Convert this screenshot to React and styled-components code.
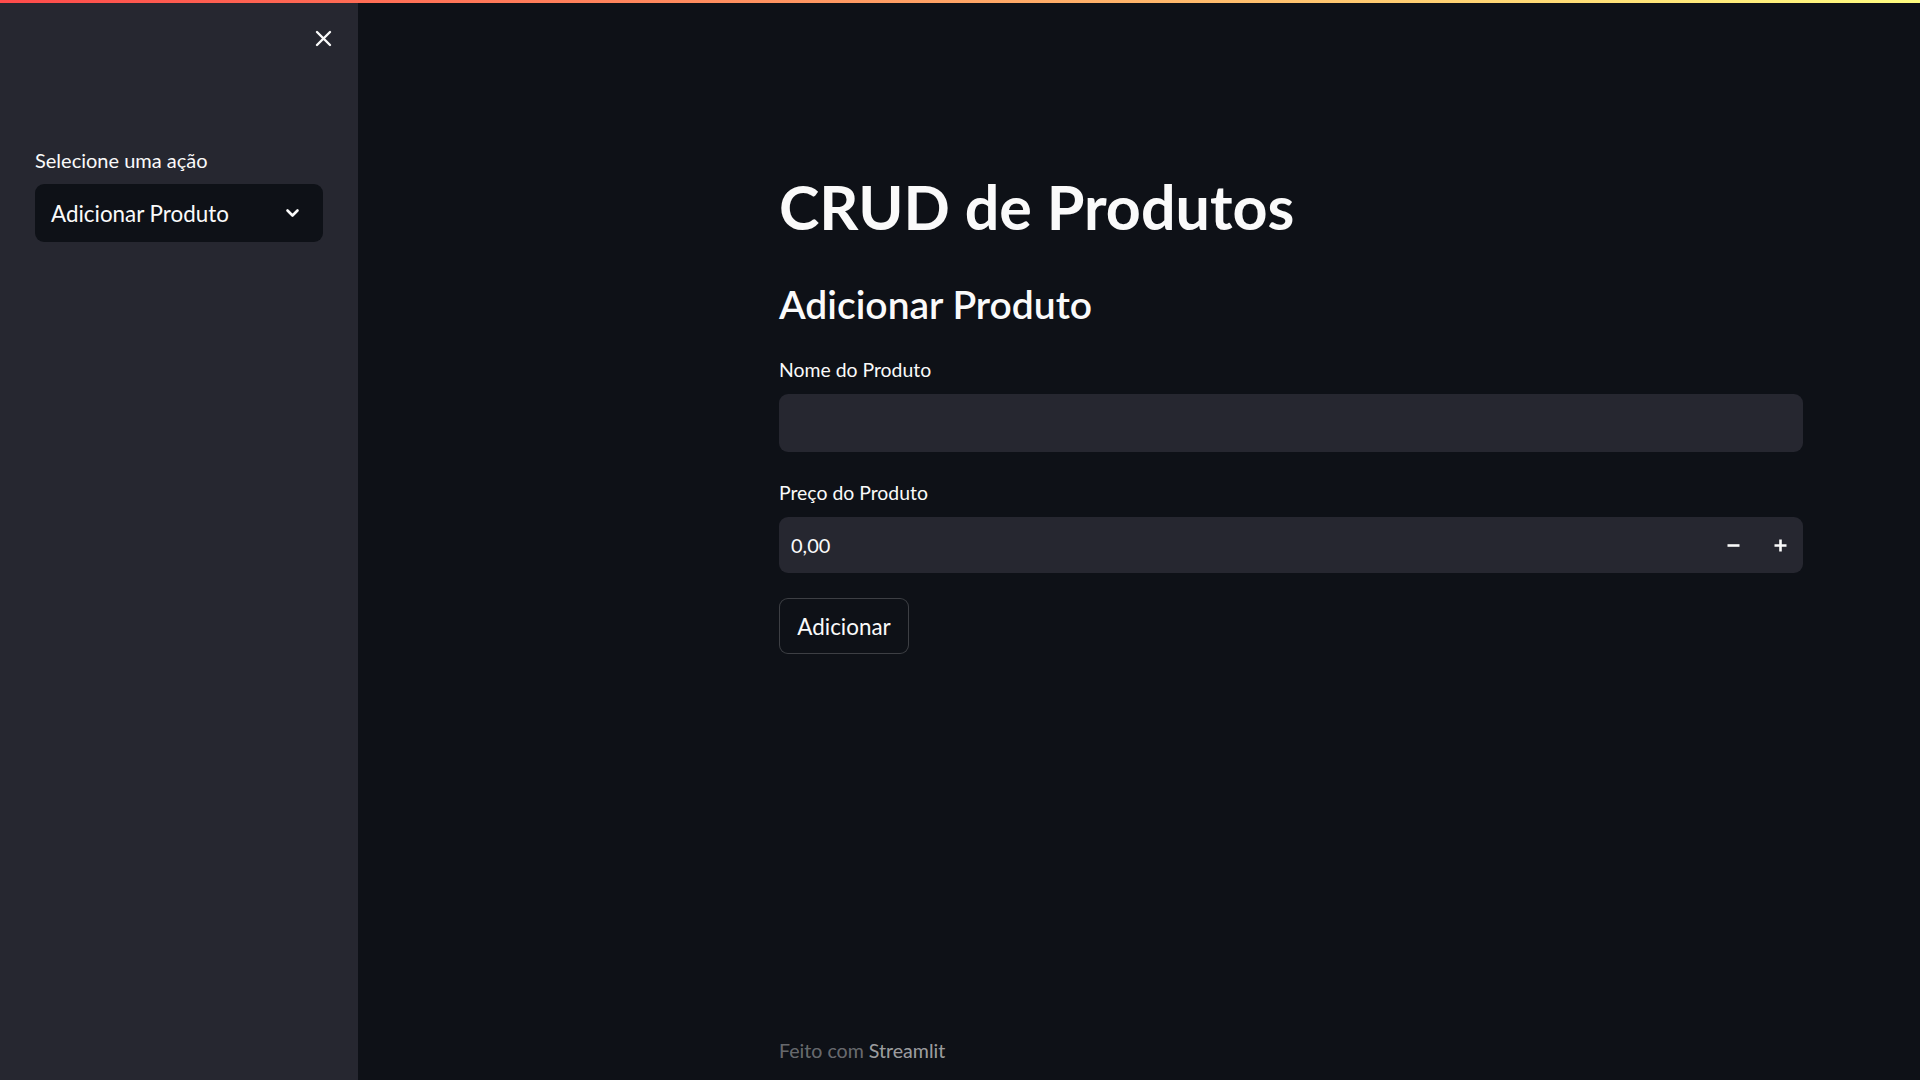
import React from "react";
import styled, { createGlobalStyle } from "styled-components";

const GlobalStyle = createGlobalStyle`
  html, body {
    margin: 0;
    padding: 0;
    background: #0e1117;
  }
  body {
    font-family: Lato, "Open Sans", sans-serif;
    color: #fafafa;
  }
  * {
    box-sizing: border-box;
  }
`;

const Page = styled.div`
  display: flex;
  flex-direction: column;
  height: 100vh;
  overflow: hidden;
`;

const Decoration = styled.div`
  height: 3px;
  flex-shrink: 0;
  background: linear-gradient(90deg, #ff4b4b 0%, #fffd80 100%);
`;

const Body = styled.div`
  display: flex;
  flex: 1;
  min-height: 0;
`;

const Sidebar = styled.aside`
  width: 358px;
  flex-shrink: 0;
  background: #262730;
  display: flex;
  flex-direction: column;
  padding: 26px 26px 0 35px;
`;

const CloseRow = styled.div`
  display: flex;
  justify-content: flex-end;
`;

const IconButton = styled.button`
  display: flex;
  align-items: center;
  justify-content: center;
  width: 18px;
  height: 18px;
  padding: 0;
  border: none;
  background: none;
  color: #fafafa;
  cursor: pointer;
`;

const FieldLabel = styled.label`
  display: block;
  font-size: ${(p) => p.$size || 20}px;
  line-height: 24px;
  color: #fafafa;
  margin-top: ${(p) => p.$top || 0}px;
  margin-bottom: 12px;
`;

const SelectBox = styled.div`
  width: 288px;
  height: 58px;
  display: flex;
  align-items: center;
  justify-content: space-between;
  padding: 0 23px 0 16px;
  background: #0e1117;
  border-radius: 9px;
  font-size: 22.4px;
  color: #fafafa;
  cursor: pointer;
`;

const Main = styled.main`
  flex: 1;
  display: flex;
  flex-direction: column;
  padding: 168px 0 17px 421px;
`;

const Content = styled.div`
  width: 1024px;
  display: flex;
  flex-direction: column;
`;

const Title = styled.h1`
  margin: 0;
  font-size: 61px;
  font-weight: 700;
  line-height: 72px;
`;

const Subheader = styled.h3`
  margin: 39px 0 0;
  font-size: 39px;
  font-weight: 600;
  line-height: 45px;
`;

const TextInput = styled.input`
  width: 100%;
  height: ${(p) => p.$height || 58}px;
  border: none;
  outline: none;
  border-radius: 9px;
  background: #262730;
  color: #fafafa;
  font-family: inherit;
  font-size: 20px;
  padding: 0 12px;
`;

const NumberWrap = styled.div`
  display: flex;
  align-items: center;
  height: 56px;
  border-radius: 9px;
  background: #262730;
  padding: 0 4px 0 12px;
`;

const NumberValue = styled.input`
  flex: 1;
  border: none;
  outline: none;
  background: none;
  color: #fafafa;
  font-family: inherit;
  font-size: 20px;
  padding: 0;
`;

const StepButton = styled.button`
  width: 38px;
  height: 40px;
  display: flex;
  align-items: center;
  justify-content: center;
  border: none;
  background: none;
  color: #fafafa;
  padding: 0;
  margin-left: 9px;
  cursor: pointer;
`;

const SubmitButton = styled.button`
  align-self: flex-start;
  margin-top: 25px;
  width: 130px;
  height: 56px;
  border: 1px solid rgba(250, 250, 250, 0.2);
  border-radius: 9px;
  background: #0e1117;
  color: #fafafa;
  font-family: inherit;
  font-size: 22.4px;
  cursor: pointer;
`;

const Footer = styled.footer`
  margin-top: auto;
  font-size: 19.6px;
  line-height: 24px;
  color: rgba(250, 250, 250, 0.4);

  span {
    color: rgba(250, 250, 250, 0.62);
  }
`;

const CloseIcon = () => (
  <svg width="17" height="17" viewBox="0 0 17 17" fill="none" stroke="currentColor" strokeWidth="2.4" strokeLinecap="round">
    <path d="M2 2 L15 15 M15 2 L2 15" />
  </svg>
);

const ChevronDown = () => (
  <svg width="15" height="10" viewBox="0 0 15 10" fill="none" stroke="currentColor" strokeWidth="2.6" strokeLinecap="round" strokeLinejoin="round">
    <path d="M2.5 2.5 L7.5 7.5 L12.5 2.5" />
  </svg>
);

const MinusIcon = () => (
  <svg width="13" height="13" viewBox="0 0 13 13" stroke="currentColor" strokeWidth="2.6">
    <path d="M0.5 6.5 H12.5" />
  </svg>
);

const PlusIcon = () => (
  <svg width="13" height="13" viewBox="0 0 13 13" stroke="currentColor" strokeWidth="2.6">
    <path d="M0.5 6.5 H12.5 M6.5 0.5 V12.5" />
  </svg>
);

export default function App() {
  return (
    <>
      <GlobalStyle />
      <Page>
        <Decoration />
        <Body>
          <Sidebar>
            <CloseRow>
              <IconButton aria-label="Fechar">
                <CloseIcon />
              </IconButton>
            </CloseRow>
            <FieldLabel $top={101}>Selecione uma ação</FieldLabel>
            <SelectBox>
              Adicionar Produto
              <ChevronDown />
            </SelectBox>
          </Sidebar>

          <Main>
            <Content>
              <Title>CRUD de Produtos</Title>
              <Subheader>Adicionar Produto</Subheader>

              <FieldLabel $top={31} $size={19.4}>Nome do Produto</FieldLabel>
              <TextInput $height={58} />

              <FieldLabel $top={29} $size={19.4}>Preço do Produto</FieldLabel>
              <NumberWrap>
                <NumberValue defaultValue="0,00" />
                <StepButton aria-label="Diminuir">
                  <MinusIcon />
                </StepButton>
                <StepButton aria-label="Aumentar">
                  <PlusIcon />
                </StepButton>
              </NumberWrap>

              <SubmitButton>Adicionar</SubmitButton>
            </Content>

            <Footer>
              Feito com <span>Streamlit</span>
            </Footer>
          </Main>
        </Body>
      </Page>
    </>
  );
}
